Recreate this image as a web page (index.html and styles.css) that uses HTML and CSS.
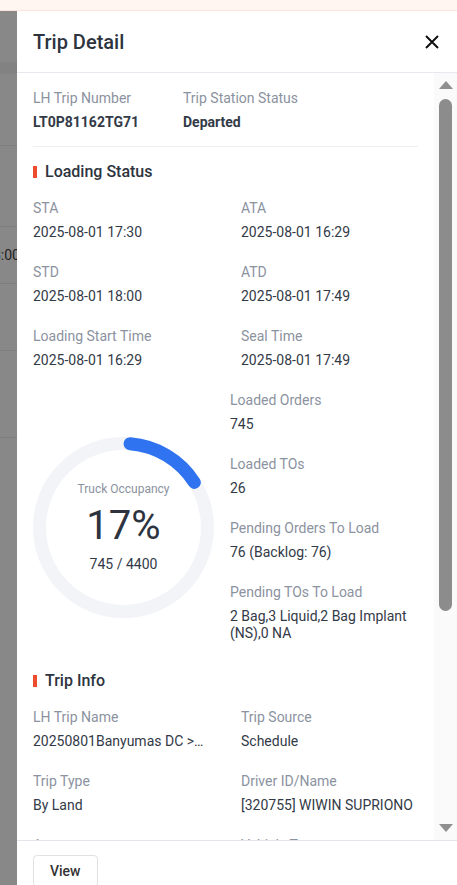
FILE: index.html
```html
<!DOCTYPE html>
<html lang="en">
<head>
    <meta charset="UTF-8">
    <meta name="viewport" content="width=device-width, initial-scale=1.0">
    <title>Trip Detail</title>
    <link rel="stylesheet" href="styles.css">
</head>
<body>
    <div class="topbar"></div>
    <div class="main">
        <div class="behind">
            <div class="bh-top"></div>
            <div class="bh-head"></div>
            <div class="bh-row bh-r1"></div>
            <div class="bh-row bh-r2"></div>
            <div class="bh-row bh-r3"><span class="bh-text">2025-08-01 18:00</span></div>
            <div class="bh-row bh-r4"></div>
            <div class="bh-row bh-r5"></div>
        </div>
        <aside class="drawer">
            <div class="drawer-head">
                <h1 class="drawer-title">Trip Detail</h1>
                <svg class="close" width="16" height="16" viewBox="0 0 16 16">
                    <path d="M2 2 L14 14 M14 2 L2 14" stroke="#111" stroke-width="2" fill="none"/>
                </svg>
            </div>
            <div class="drawer-body">
                <div class="content">
                    <div class="trip-head">
                        <div class="item">
                            <div class="label">LH Trip Number</div>
                            <div class="value bold">LT0P81162TG71</div>
                        </div>
                        <div class="item">
                            <div class="label">Trip Station Status</div>
                            <div class="value bold">Departed</div>
                        </div>
                    </div>

                    <h2 class="section-title">Loading Status</h2>
                    <div class="grid">
                        <div class="item">
                            <div class="label">STA</div>
                            <div class="value">2025-08-01 17:30</div>
                        </div>
                        <div class="item">
                            <div class="label">ATA</div>
                            <div class="value">2025-08-01 16:29</div>
                        </div>
                        <div class="item">
                            <div class="label">STD</div>
                            <div class="value">2025-08-01 18:00</div>
                        </div>
                        <div class="item">
                            <div class="label">ATD</div>
                            <div class="value">2025-08-01 17:49</div>
                        </div>
                        <div class="item">
                            <div class="label">Loading Start Time</div>
                            <div class="value">2025-08-01 16:29</div>
                        </div>
                        <div class="item">
                            <div class="label">Seal Time</div>
                            <div class="value">2025-08-01 17:49</div>
                        </div>
                    </div>

                    <div class="occupancy">
                        <div class="gauge">
                            <svg class="ring" width="181" height="181" viewBox="0 0 181 181">
                                <circle cx="90.5" cy="90.5" r="84" fill="none" stroke="#f2f4f8" stroke-width="13"/>
                                <path d="M 97.09 6.76 A 84 84 0 0 1 161.34 45.37" fill="none" stroke="#2f73f0" stroke-width="13" stroke-linecap="round"/>
                            </svg>
                            <div class="gauge-text">
                                <div class="gauge-label">Truck Occupancy</div>
                                <div class="gauge-pct">17%</div>
                                <div class="gauge-count">745 / 4400</div>
                            </div>
                        </div>
                        <div class="occ-list">
                            <div class="item">
                                <div class="label">Loaded Orders</div>
                                <div class="value">745</div>
                            </div>
                            <div class="item">
                                <div class="label">Loaded TOs</div>
                                <div class="value">26</div>
                            </div>
                            <div class="item">
                                <div class="label">Pending Orders To Load</div>
                                <div class="value">76 (Backlog: 76)</div>
                            </div>
                            <div class="item">
                                <div class="label">Pending TOs To Load</div>
                                <div class="value">2 Bag,3 Liquid,2 Bag Implant (NS),0 NA</div>
                            </div>
                        </div>
                    </div>

                    <h2 class="section-title trip-info">Trip Info</h2>
                    <div class="grid">
                        <div class="item">
                            <div class="label">LH Trip Name</div>
                            <div class="value ellipsis">20250801Banyumas DC &gt; Cilacap LH</div>
                        </div>
                        <div class="item">
                            <div class="label">Trip Source</div>
                            <div class="value">Schedule</div>
                        </div>
                        <div class="item">
                            <div class="label">Trip Type</div>
                            <div class="value">By Land</div>
                        </div>
                        <div class="item">
                            <div class="label">Driver ID/Name</div>
                            <div class="value">[320755] WIWIN SUPRIONO</div>
                        </div>
                        <div class="item">
                            <div class="label">Agency</div>
                            <div class="value">-</div>
                        </div>
                        <div class="item">
                            <div class="label">Vehicle Type</div>
                            <div class="value">-</div>
                        </div>
                    </div>
                </div>
                <div class="scrollbar">
                    <div class="arrow-up"></div>
                    <div class="thumb"></div>
                    <div class="arrow-down"></div>
                </div>
            </div>
            <div class="drawer-foot">
                <button class="btn">View</button>
            </div>
        </aside>
    </div>
</body>
</html>
```

FILE: styles.css
```css
html, body {
    margin: 0;
    padding: 0;
    height: 100%;
}
body {
    display: flex;
    flex-direction: column;
    overflow: hidden;
    font-family: Roboto, 'Liberation Sans', sans-serif;
    color: #333a47;
    background: #888;
}
.topbar {
    height: 10px;
    flex-shrink: 0;
    background-color: #fff6f2;
    border-bottom: 1px solid #fbe6dc;
}
.main {
    flex: 1;
    min-height: 0;
    display: flex;
}

/* page under the mask */
.behind {
    width: 17px;
    flex-shrink: 0;
    background-color: #888;
    display: flex;
    flex-direction: column;
    overflow: hidden;
}
.bh-top {
    height: 51px;
}
.bh-head {
    height: 12px;
    background-color: #828282;
}
.bh-row {
    border-bottom: 1px solid #7e7e7e;
    display: flex;
    align-items: center;
    justify-content: flex-end;
    overflow: hidden;
    white-space: nowrap;
}
.bh-r1 { height: 71px; }
.bh-r2 { height: 80px; }
.bh-r3 { height: 56px; }
.bh-r4 { height: 66px; }
.bh-r5 { height: 86px; }
.bh-text {
    font-size: 14px;
    color: #1f1f1f;
    margin-right: -3px;
}

/* drawer */
.drawer {
    flex: 1;
    min-width: 0;
    background-color: #fff;
    display: flex;
    flex-direction: column;
}
.drawer-head {
    height: 62px;
    flex-shrink: 0;
    box-sizing: border-box;
    border-bottom: 1px solid #e8e9ee;
    padding: 0 16px;
    display: flex;
    align-items: center;
    justify-content: space-between;
}
.drawer-title {
    margin: 0;
    font-size: 20px;
    font-weight: 500;
    color: #2d3440;
}
.close {
    margin-right: 1px;
}
.drawer-body {
    flex: 1;
    min-height: 0;
    display: flex;
}
.content {
    flex: 1;
    min-width: 0;
    overflow: hidden;
    padding: 14px 16px 0 16px;
}
.trip-head {
    display: flex;
    gap: 44px;
    padding-bottom: 13px;
    border-bottom: 1px solid #eceef2;
}
.trip-head .value {
    margin-top: 2px;
    line-height: 22px;
}
.label {
    font-size: 14px;
    line-height: 22px;
    color: #8b92a0;
}
.value {
    font-size: 14px;
    line-height: 17px;
    margin-top: 5px;
    color: #333a47;
}
.bold {
    font-weight: 700;
}
.ellipsis {
    max-width: 172px;
    white-space: nowrap;
    overflow: hidden;
    text-overflow: ellipsis;
}
.section-title {
    margin: 13px 0 0 0;
    font-size: 16px;
    line-height: 24px;
    font-weight: 500;
    color: #2d3440;
    display: flex;
    align-items: center;
}
.section-title::before {
    content: "";
    width: 4px;
    height: 12px;
    background-color: #ee4d2d;
    margin-right: 8px;
}
.trip-info {
    margin-top: 27px;
}
.grid {
    margin-top: 13px;
    display: grid;
    grid-template-columns: 1fr 1fr;
    column-gap: 31px;
    row-gap: 20px;
}

/* occupancy */
.occupancy {
    margin-top: 20px;
    display: flex;
    gap: 16px;
    align-items: flex-start;
}
.gauge {
    width: 181px;
    height: 181px;
    margin-top: 48px;
    flex-shrink: 0;
    display: grid;
}
.ring, .gauge-text {
    grid-area: 1 / 1;
}
.gauge-text {
    display: flex;
    flex-direction: column;
    align-items: center;
    justify-content: center;
}
.gauge-label {
    font-size: 12px;
    line-height: 16px;
    color: #8b92a0;
    margin-bottom: 5px;
}
.gauge-pct {
    font-size: 40px;
    line-height: 48px;
    color: #2d3440;
    margin-bottom: 4px;
}
.gauge-count {
    font-size: 14px;
    line-height: 20px;
    color: #333a47;
}
.occ-list {
    flex: 1;
    display: flex;
    flex-direction: column;
    gap: 20px;
}

/* fake scrollbar */
.scrollbar {
    width: 23px;
    flex-shrink: 0;
    background-color: #fafafa;
    display: flex;
    flex-direction: column;
    align-items: center;
    padding-top: 8px;
    padding-bottom: 8px;
    box-sizing: border-box;
}
.arrow-up {
    width: 0;
    height: 0;
    border-left: 7.5px solid transparent;
    border-right: 7.5px solid transparent;
    border-bottom: 8px solid #8f8f8f;
}
.thumb {
    width: 13px;
    height: 512px;
    margin-top: 10px;
    border-radius: 7px;
    background-color: #8c8c8c;
}
.arrow-down {
    margin-top: auto;
    width: 0;
    height: 0;
    border-left: 7.5px solid transparent;
    border-right: 7.5px solid transparent;
    border-top: 8px solid #8f8f8f;
}

.drawer-foot {
    height: 45px;
    flex-shrink: 0;
    box-sizing: border-box;
    border-top: 1px solid #e5e6eb;
    padding: 14px 16px 0 16px;
}
.btn {
    height: 32px;
    padding: 0 16px;
    border: 1px solid #e1e1e1;
    border-radius: 4px;
    background-color: #fff;
    font-family: Roboto, 'Liberation Sans', sans-serif;
    font-size: 14px;
    font-weight: 500;
    color: #333;
}
```
